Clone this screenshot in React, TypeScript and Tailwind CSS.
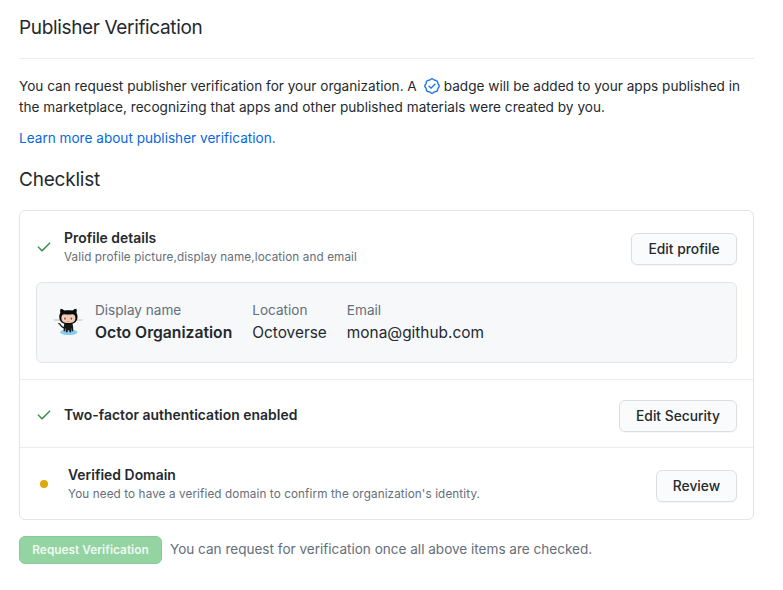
import type { ReactNode } from "react";
import { GoCheck, GoVerified } from "react-icons/go";

function Octocat() {
  return (
    <svg viewBox="0 0 32 32" className="h-8 w-8 shrink-0" aria-hidden="true">
      <ellipse cx="16.8" cy="26.2" rx="8.7" ry="2.9" fill="#84cdf2" />
      <path
        d="M1.4 13.7h7M2.4 14.6l6-.4M31 13.7h-7M30 14.6l-6-.4"
        stroke="#c4c7cb"
        strokeWidth="0.6"
        fill="none"
      />
      <path
        d="M6.8 17.6c2.3.2 1.5 3.6 4.6 3.9l2 .1"
        stroke="#111"
        strokeWidth="1.3"
        fill="none"
        strokeLinecap="round"
      />
      <path
        d="M12.6 17h7.600c.900 2.200 1.200 5 1 8.200h-1.300l-.300-3.400-.500 4.400h-1.600l-.300-2h-1.400l-.300 2h-1.600l-.500-4.400-.500 3.400h-1.200c-.200-3 0-5.800.900-8.200z"
        fill="#17181a"
      />
      <path
        d="M8.600 2.700c1.500.100 2.800.900 3.900 1.900 2.600-.500 5.300-.500 7.900 0 1.100-1 2.400-1.800 3.900-1.900.600 1.500.600 3 .200 4.400.800 1.200 1.100 2.600 1 4.200-.200 4.700-3.400 7-9.100 7s-8.900-2.300-9.100-7c-.100-1.600.200-3 1-4.200-.400-1.400-.300-2.900.300-4.400z"
        fill="#0b0b0c"
      />
      <path
        d="M12.300 8.300c2.700.400 5.400.400 8.100 0 2 0 3 1.600 3 3.700 0 3.900-2.700 5-7 5s-7-1.100-7-5c0-2.100 1-3.700 2.900-3.700z"
        fill="#f0c9b3"
      />
      <ellipse cx="12.900" cy="12.400" rx="1.500" ry="1.900" fill="#fbeee6" />
      <ellipse cx="19.500" cy="12.400" rx="1.500" ry="1.900" fill="#fbeee6" />
      <ellipse cx="13" cy="12.600" rx="0.950" ry="1.400" fill="#a5534a" />
      <ellipse cx="19.400" cy="12.600" rx="0.950" ry="1.400" fill="#a5534a" />
      <path d="M15.300 15.500q.900.500 1.800 0" stroke="#a5534a" strokeWidth="0.5" fill="none" />
    </svg>
  );
}

function Button({ children, className }: { children: ReactNode; className: string }) {
  return (
    <button
      className={`${className} flex h-8 shrink-0 items-center justify-center rounded-md border border-[#dcdee0] bg-[#fafbfc] text-[13.8px] font-medium text-[#24292e] shadow-[0_1px_0_rgba(27,31,35,0.03)]`}
    >
      {children}
    </button>
  );
}

function Item({ title, note, className }: { title: string; note?: string; className?: string }) {
  return (
    <div className={`grow ${className ?? ""}`}>
      <h3 className="text-[13.9px] leading-5 font-semibold tracking-[0.03px]">{title}</h3>
      {note && <p className="text-[11.7px] leading-[18px] tracking-[0.115px] text-[#656e79]">{note}</p>}
    </div>
  );
}

function Field({ label, value, bold }: { label: string; value: string; bold?: boolean }) {
  return (
    <div>
      <div className="text-[13.6px] leading-5 text-[#656e79]">{label}</div>
      <div className={bold ? "text-[15.7px] leading-[26px] font-semibold" : "text-[15.4px] leading-[26px]"}>{value}</div>
    </div>
  );
}

export default function App() {
  return (
    <main className="min-h-[590px] w-[783px] bg-white pt-[13px] pr-[29px] pl-[19px] font-['Inter',sans-serif] whitespace-nowrap text-[#24292e]">
      <h1 className="border-b border-[#eaecef] pb-[15px] text-[19px] leading-[30px] tracking-[-0.35px]">
        Publisher Verification
      </h1>

      <p className="mt-[17px] text-[13.6px] leading-[21px]">
        <span className="flex items-center">
          You can request publisher verification for your organization. A
          <GoVerified className="-mt-px mr-1 ml-[7px] h-4 w-4 stroke-current stroke-[0.5] text-[#0969e6]" />
          <span className="tracking-[0.015px]">badge will be added to your apps published in</span>
        </span>
        <span className="block tracking-[0.025px]">
          the marketplace, recognizing that apps and other published materials were created by you.
        </span>
      </p>
      <a href="#" className="mt-[10px] block w-fit text-[13.6px] leading-[21px] text-[#0668e0]">
        Learn more about publisher verification.
      </a>

      <h2 className="mt-4 text-[19px] leading-[30px] tracking-[-0.2px]">Checklist</h2>

      <section className="mt-[15px] w-[735px] rounded-md border border-[#e1e4e8]">
        <div className="h-[169px] border-b border-[#eaecef] px-4 pt-[17px] pb-4">
          <div className="flex h-[54px] items-start">
            <GoCheck className="mt-[11px] mr-3 h-4 w-4 stroke-current stroke-[0.6] text-[#22863a]" />
            <Item title="Profile details" note="Valid profile picture,display name,location and email" />
            <Button className="mt-[5px] w-[106px]">Edit profile</Button>
          </div>
          <div className="flex h-[81px] items-start gap-5 rounded-md border border-[#e1e4e8] bg-[#f6f8fa] pt-[17px] pl-[15px]">
            <div className="mt-[6px] -mr-[9px]">
              <Octocat />
            </div>
            <Field label="Display name" value="Octo Organization" bold />
            <Field label="Location" value="Octoverse" />
            <Field label="Email" value="mona@github.com" />
          </div>
        </div>

        <div className="flex h-[68px] items-start border-b border-[#eaecef] px-4 pt-5">
          <GoCheck className="mt-[7px] mr-3 h-4 w-4 stroke-current stroke-[0.6] text-[#22863a]" />
          <Item title="Two-factor authentication enabled" className="mt-[5px]" />
          <Button className="w-[118px]">Edit Security</Button>
        </div>

        <div className="flex h-[71px] items-start px-4 pt-[17px]">
          <span className="mt-[15px] mr-5 ml-1 h-2 w-2 rounded-full bg-[#dbab09]" />
          <Item title="Verified Domain" note="You need to have a verified domain to confirm the organization's identity." />
          <Button className="mt-[5px] w-[81px]">Review</Button>
        </div>
      </section>

      <div className="mt-4 flex items-start gap-2">
        <button
          disabled
          className="flex h-7 w-[143px] items-center justify-center rounded-md border border-[#8bc798] bg-[#94d3a2] pt-px text-[11.8px] font-semibold tracking-[0.04px] text-[#eefaf1]"
        >
          Request Verification
        </button>
        <span className="mt-[3px] text-[13.55px] leading-[21px] text-[#656e79]">
          You can request for verification once all above items are checked.
        </span>
      </div>
    </main>
  );
}
